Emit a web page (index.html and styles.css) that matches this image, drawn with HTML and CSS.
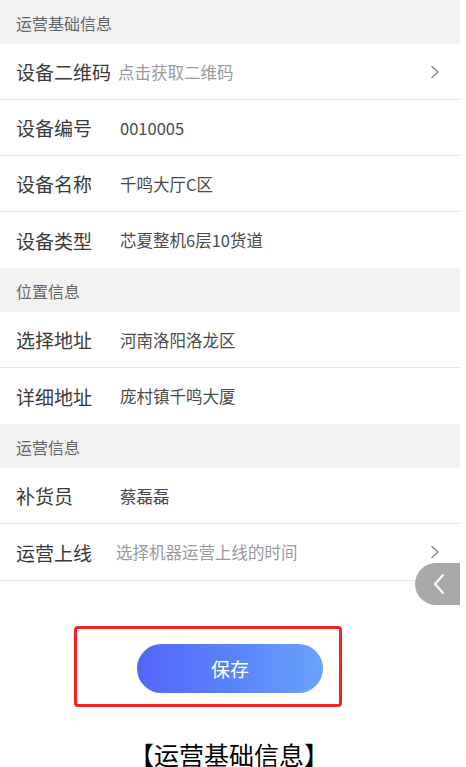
FILE: index.html
```html
<!DOCTYPE html>
<html lang="zh-CN">
<head>
<meta charset="utf-8">
<title>运营基础信息</title>
<link rel="stylesheet" href="styles.css">
</head>
<body>
<div class="page">
  <div class="section-head">运营基础信息</div>
  <div class="row">
    <span class="label label-tight">设备二维码</span>
    <span class="placeholder">点击获取二维码</span>
    <svg class="chev" width="10" height="16" viewBox="0 0 10 16"><path d="M2 2.5 L8 8 L2 13.5" fill="none" stroke="#8c8c8c" stroke-width="1.6" stroke-linecap="round" stroke-linejoin="round"/></svg>
  </div>
  <div class="row">
    <span class="label">设备编号</span>
    <span class="value">0010005</span>
  </div>
  <div class="row">
    <span class="label">设备名称</span>
    <span class="value">千鸣大厅C区</span>
  </div>
  <div class="row row-last">
    <span class="label">设备类型</span>
    <span class="value">芯夏整机6层10货道</span>
  </div>

  <div class="section-head">位置信息</div>
  <div class="row">
    <span class="label">选择地址</span>
    <span class="value">河南洛阳洛龙区</span>
  </div>
  <div class="row row-last">
    <span class="label">详细地址</span>
    <span class="value">庞村镇千鸣大厦</span>
  </div>

  <div class="section-head">运营信息</div>
  <div class="row">
    <span class="label">补货员</span>
    <span class="value">蔡磊磊</span>
  </div>
  <div class="row row-tall">
    <span class="label label-ph">运营上线</span>
    <span class="placeholder">选择机器运营上线的时间</span>
    <svg class="chev" width="10" height="16" viewBox="0 0 10 16"><path d="M2 2.5 L8 8 L2 13.5" fill="none" stroke="#8c8c8c" stroke-width="1.6" stroke-linecap="round" stroke-linejoin="round"/></svg>
  </div>

  <div class="actions">
    <button class="save-btn" type="button">保存</button>
  </div>
  <div class="highlight"></div>

  <div class="caption">【运营基础信息】</div>

  <div class="back-btn">
    <svg width="16" height="24" viewBox="0 0 16 24"><path d="M12 3 L4 12 L12 21" fill="none" stroke="#ffffff" stroke-width="2" stroke-linecap="round" stroke-linejoin="round"/></svg>
  </div>
</div>
</body>
</html>
```

FILE: styles.css
```css
html, body {
  margin: 0;
  padding: 0;
  background: #ffffff;
}
body {
  font-family: "Noto Sans CJK SC", "Noto Sans", sans-serif;
  overflow: hidden;
  height: 767px;
}
.page {
  position: relative;
  width: 460px;
}
.section-head {
  height: 44px;
  box-sizing: border-box;
  padding: 2px 16px 0;
  display: flex;
  align-items: center;
  background: #f2f2f2;
  color: #666666;
  font-size: 16px;
}
.row {
  height: 56px;
  box-sizing: border-box;
  border-bottom: 1px solid #e6e6e6;
  display: flex;
  align-items: center;
  padding: 0 20px 0 16px;
}
.row-last {
  border-bottom: none;
}
.row-tall {
  height: 57px;
}
.label {
  width: 104px;
  flex: none;
  font-size: 19px;
  color: #3a3a3a;
}
.label-tight {
  width: auto;
  margin-right: 7px;
}
.label-ph {
  width: 100px;
}
.value {
  flex: 1;
  font-size: 16.5px;
  color: #4a4a4a;
}
.placeholder {
  flex: 1;
  font-size: 16.5px;
  color: #9a9a9a;
}
.chev {
  flex: none;
  display: block;
}
.actions {
  display: flex;
  justify-content: center;
  padding-top: 63px;
}
.save-btn {
  width: 186px;
  height: 49px;
  border: none;
  border-radius: 25px;
  background: linear-gradient(90deg, #5166f8 0%, #5a86fa 55%, #6aa3fb 100%);
  color: #ffffff;
  font-family: "Noto Sans CJK SC", sans-serif;
  font-size: 19px;
  padding: 0;
}
.highlight {
  position: absolute;
  left: 74px;
  top: 626px;
  width: 268px;
  height: 81px;
  box-sizing: border-box;
  border: 3px solid #f52222;
  border-radius: 4px;
}
.caption {
  margin-top: 45px;
  text-align: center;
  font-family: "Noto Sans CJK SC", serif;
  font-size: 25px;
  line-height: 32px;
  color: #000000;
  padding-right: 2px;
}
.back-btn {
  position: absolute;
  right: 0;
  top: 563px;
  width: 45px;
  height: 42px;
  border-radius: 21px 0 0 21px;
  background: #a9a9a9;
  display: flex;
  align-items: center;
  justify-content: center;
  padding-left: 2px;
  box-sizing: border-box;
}
.back-btn svg {
  display: block;
}
```
